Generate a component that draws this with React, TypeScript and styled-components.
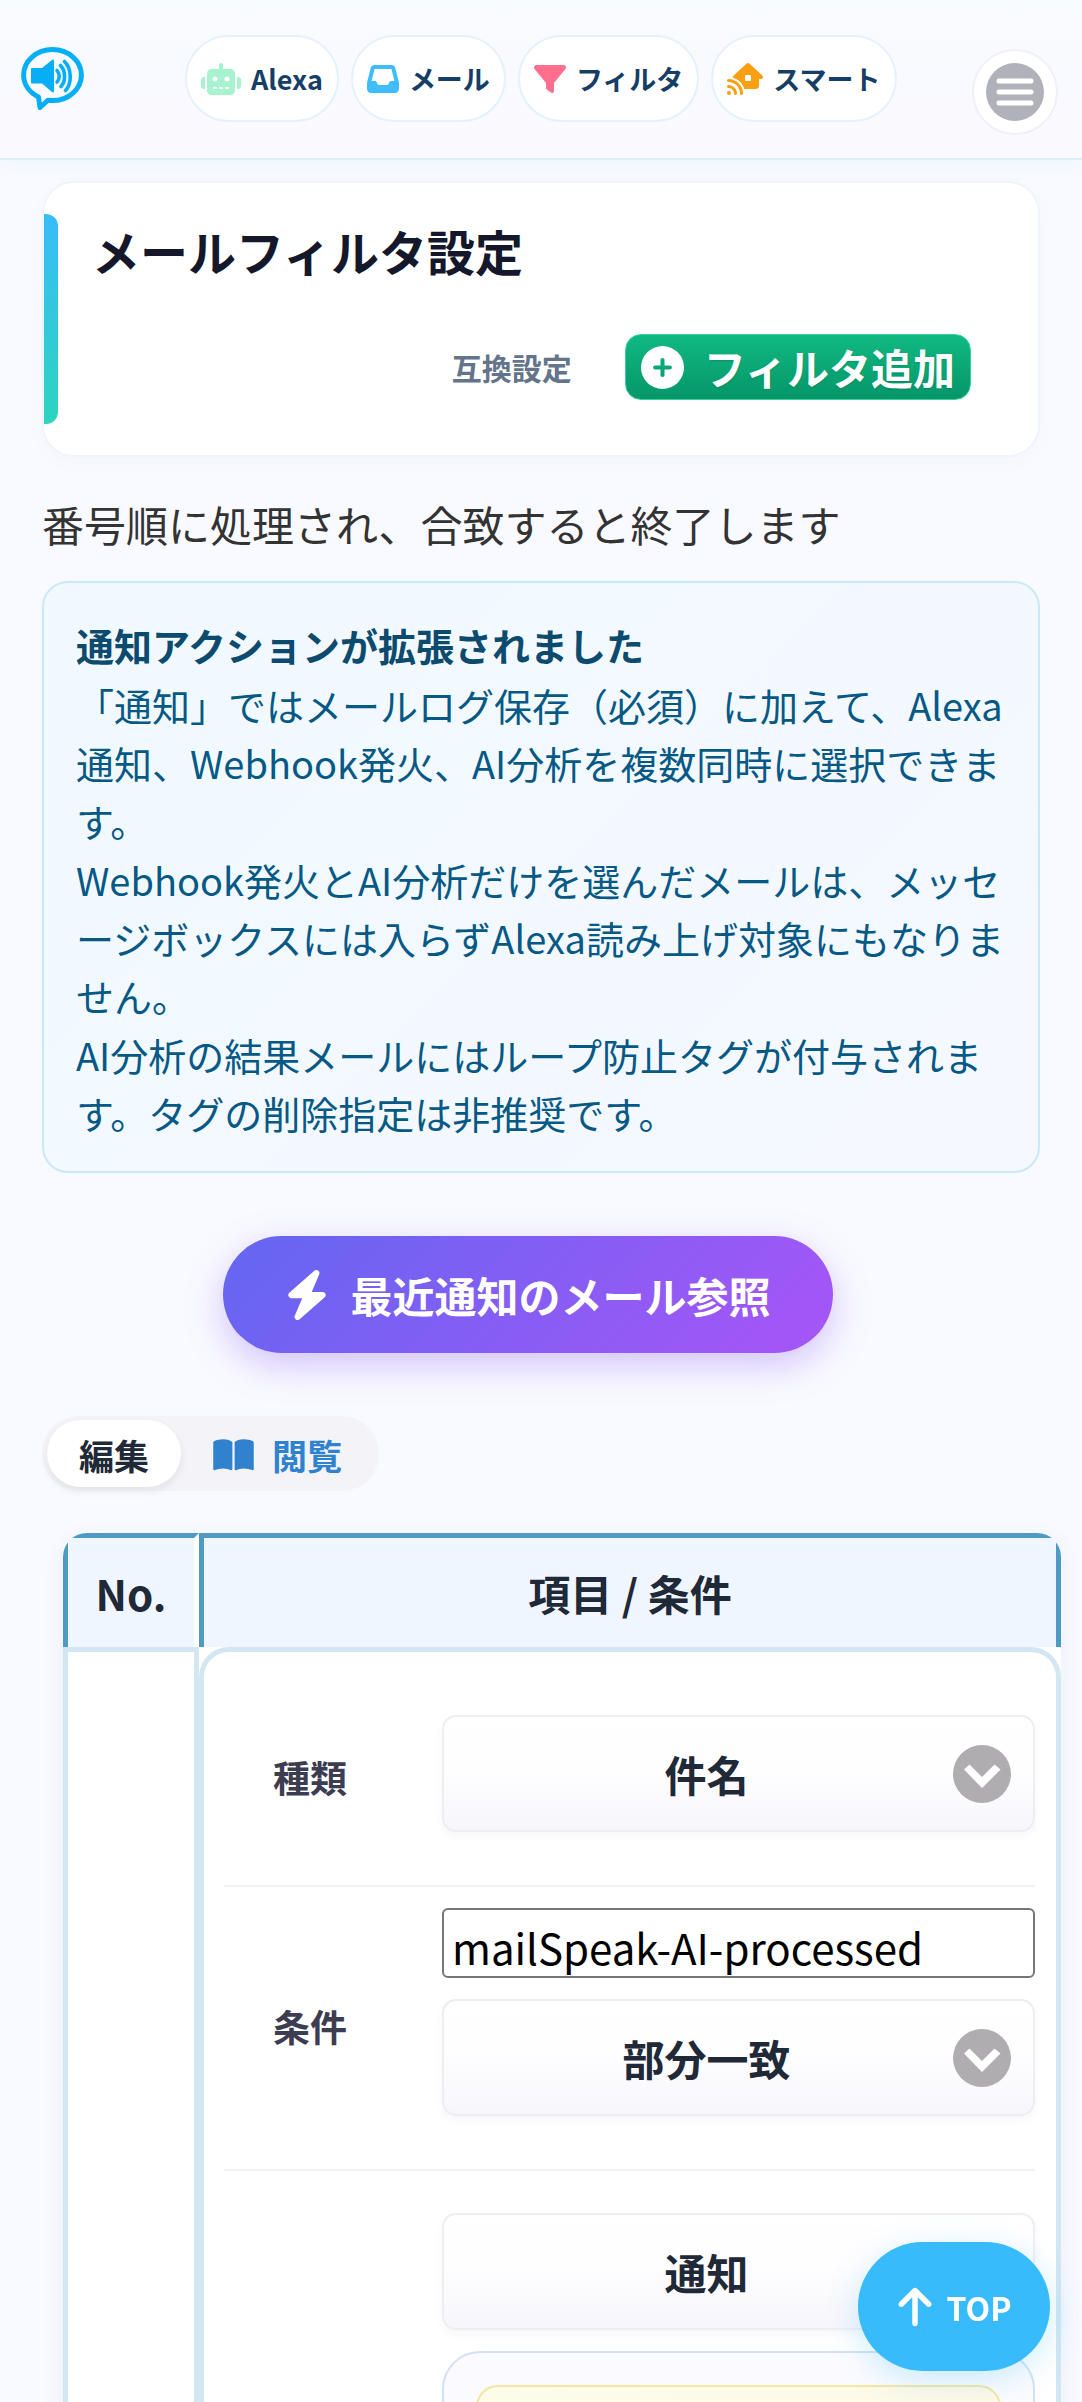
import React, { useState } from "react";
import styled, { createGlobalStyle } from "styled-components";
import {
  FaArrowUp,
  FaBolt,
  FaBookOpen,
  FaCirclePlus,
  FaFilter,
  FaHouseSignal,
  FaInbox,
  FaRobot,
} from "react-icons/fa6";

const GlobalStyle = createGlobalStyle`
  *, *::before, *::after { box-sizing: border-box; }
  html { scrollbar-width: none; }
  body {
    margin: 0;
    background: #f9faff;
    color: #333333;
    font-family: "Noto Sans CJK JP", "Noto Sans", sans-serif;
  }
  button, input, select { font-family: inherit; }
`;

const Screen = styled.div`
  height: 100vh;
  overflow-x: hidden;
  overflow-y: auto;
  scrollbar-width: none;
`;

const Header = styled.header`
  display: flex;
  align-items: flex-start;
  padding: 35px 24px 36px 21px;
  border-bottom: 2px solid #dcedf7;
  background: linear-gradient(180deg, #f8fbff, #faf9ff);
  box-shadow: 0 4px 20px rgba(56, 189, 248, 0.06);
`;

const LogoLink = styled.a`
  display: flex;
  width: 164px;
  padding-top: 12px;
`;

const Nav = styled.nav`
  display: flex;
  flex: 1;
  gap: 12px;
`;

const NavPill = styled.a<{ $tint: string; $iconWidth: number }>`
  display: flex;
  align-items: center;
  gap: 10px;
  height: 87px;
  padding: 0 14px;
  border: 2px solid #e6f1fb;
  border-radius: 44px;
  background: #ffffff;
  color: #153e66;
  font-size: 27px;
  font-weight: 700;
  line-height: 40px;
  text-decoration: none;
  white-space: nowrap;

  svg {
    flex: none;
    width: ${(p) => p.$iconWidth}px;
    height: 32px;
    color: ${(p) => p.$tint};
  }
`;

const MenuButton = styled.button`
  display: grid;
  place-items: center;
  width: 86px;
  height: 86px;
  margin: 14px 0 -14px;
  padding: 0;
  border: 2px solid #f0f0f8;
  border-radius: 50%;
  background: #ffffff;
`;

const Main = styled.main`
  padding: 21px 42px 0;
`;

const TitleCard = styled.section`
  position: relative;
  display: flex;
  flex-direction: column;
  gap: 46px;
  padding: 29px 67px 55px 48px;
  border: 2px solid #eef5fc;
  border-radius: 32px;
  background: #ffffff;
  box-shadow: 0 6px 24px rgba(15, 23, 42, 0.02);

  &::before {
    content: "";
    position: absolute;
    left: 0;
    top: 31px;
    bottom: 31px;
    width: 14px;
    border-radius: 0 12px 12px 0;
    background: linear-gradient(180deg, #38bdf8, #2dd4bf);
  }
`;

const PageTitle = styled.h1`
  margin: 0;
  color: #14182a;
  font-size: 48px;
  font-weight: 700;
  line-height: 76px;
`;

const CardActions = styled.div`
  display: flex;
  align-items: center;
  justify-content: flex-end;
  gap: 53px;
`;

const CompatLink = styled.a`
  color: #64748b;
  font-size: 30px;
  font-weight: 700;
  line-height: 44px;
  text-decoration: none;
`;

const AddButton = styled.button`
  display: flex;
  align-items: center;
  gap: 20px;
  height: 66px;
  padding: 0 15px;
  border: 1px solid #34d399;
  border-radius: 16px;
  background: linear-gradient(180deg, #10b981, #059669);
  color: #ffffff;
  font-size: 42px;
  font-weight: 700;
  line-height: 62px;
  text-shadow: 0 1px 2px rgba(0, 0, 0, 0.15);

  svg {
    width: 43px;
    height: 43px;
  }
`;

const Lead = styled.p`
  margin: 36px 0 26px;
  font-size: 42px;
  line-height: 62px;
`;

const Notice = styled.section`
  padding: 33px 24px 29px 32px;
  border: 2px solid #cbe8fb;
  border-radius: 26px;
  background: linear-gradient(135deg, #f0f9ff, #f5f8ff);
  color: #075985;
  font-size: 38px;
  line-height: 58px;
`;

const NoticeTitle = styled.h2`
  margin: 0 0 2px;
  color: #0c4a6e;
  font-size: 38px;
  font-weight: 700;
  line-height: 58px;
`;

const NoticeText = styled.p`
  margin: 0;

  & + & {
    margin-top: 1px;
  }
`;

const RecentRow = styled.div`
  display: flex;
  justify-content: center;
  padding: 63px 26px 63px 0;
`;

const RecentButton = styled.button`
  display: flex;
  align-items: center;
  gap: 21px;
  height: 117px;
  padding: 0 62px;
  border: 0;
  border-radius: 59px;
  background: linear-gradient(135deg, #6366f1, #a855f7);
  box-shadow: 0 12px 36px rgba(139, 92, 246, 0.35);
  color: #ffffff;
  font-size: 42px;
  font-weight: 700;
  line-height: 62px;
  white-space: nowrap;

  svg {
    width: 44px;
    height: 50px;
  }
`;

const Tabs = styled.div`
  display: flex;
  width: fit-content;
  padding: 4px 5px;
  border-radius: 37px;
  background: #f3f3f8;
`;

const Tab = styled.button<{ $active: boolean }>`
  display: flex;
  align-items: center;
  gap: 18px;
  height: 67px;
  padding: 2px 32px 0;
  border: 0;
  border-radius: 34px;
  background: ${(p) => (p.$active ? "#ffffff" : "transparent")};
  box-shadow: ${(p) => (p.$active ? "0 4px 8px rgba(30, 30, 60, 0.08)" : "none")};
  color: ${(p) => (p.$active ? "#1f2937" : "#3182ce")};
  font-size: 35px;
  font-weight: 700;
  line-height: 52px;

  svg {
    width: 41px;
    height: 36px;
  }
`;

const TableFrame = styled.div`
  margin: 42px -21px 60px 21px;
  border-radius: 24px;
  overflow: hidden;
  background: #ffffff;
  box-shadow: 0 6px 24px rgba(30, 64, 175, 0.06);
`;

const FilterTable = styled.table`
  width: 100%;
  table-layout: fixed;
  border-collapse: separate;
  border-spacing: 0;
`;

const HeadCell = styled.th<{ $narrow?: boolean }>`
  width: ${(p) => (p.$narrow ? "136px" : "auto")};
  height: 114px;
  padding: 0;
  border: 5px solid #4e9ac5;
  border-right-color: ${(p) => (p.$narrow ? "#ffffff" : "#4e9ac5")};
  border-bottom-width: 0;
  background: #f0f6ff;
  background-clip: padding-box;
  color: #1f2937;
  font-size: 42px;
  font-weight: 700;
  line-height: 62px;
`;

const BodyCell = styled.td<{ $rounded?: boolean }>`
  padding: ${(p) => (p.$rounded ? "21px 21px 21px 20px" : "0")};
  border: 5px solid #d2e7f2;
  border-radius: ${(p) => (p.$rounded ? "30px" : "0")};
  background: #ffffff;
  vertical-align: top;
`;

const Field = styled.div`
  display: grid;
  grid-template-columns: 172px 1fr;
  column-gap: 46px;
  align-items: center;
  padding: 21px 0 53px;
  border-bottom: 2px solid #f5f2f8;
`;

const FieldLabel = styled.label`
  padding-top: 28px;
  color: #3d3d52;
  font-size: 37px;
  font-weight: 700;
  line-height: 54px;
  text-align: center;
`;

const Controls = styled.div`
  display: flex;
  flex-direction: column;
  gap: 21px;
  grid-column: 2;
`;

const SelectWrap = styled.div<{ $spaced?: boolean }>`
  position: relative;
  margin-top: ${(p) => (p.$spaced ? "21px" : "0")};

  svg {
    position: absolute;
    right: 24px;
    top: 30px;
    pointer-events: none;
  }
`;

const Select = styled.select`
  appearance: none;
  display: block;
  width: 100%;
  height: 117px;
  padding: 0 92px 0 28px;
  border: 2px solid #efedf4;
  border-radius: 14px;
  background: linear-gradient(180deg, #ffffff 0%, #fefdff 45%, #f7f6fb 100%);
  box-shadow: 0 4px 8px rgba(60, 40, 100, 0.04);
  color: #1f2937;
  font-size: 42px;
  font-weight: 700;
  text-align: center;
  text-align-last: center;
`;

const TextInput = styled.input`
  width: 100%;
  height: 70px;
  padding: 6px 8px 0;
  border: 2px solid #76767a;
  border-radius: 6px;
  background: #ffffff;
  color: #000000;
  font-size: 42px;
  line-height: 60px;
`;

const ActionPanel = styled.div`
  padding: 32px;
  border: 2px solid #d3e0f8;
  border-radius: 38px;
  background: #fbfbff;
`;

const ActionNote = styled.div`
  min-height: 360px;
  border: 2px solid #f3e6a2;
  border-radius: 22px;
  background: linear-gradient(90deg, #fcfde8, #fef9e8);
`;

const TopButton = styled.button`
  position: fixed;
  right: 32px;
  bottom: 31px;
  display: flex;
  align-items: center;
  justify-content: center;
  gap: 14px;
  width: 192px;
  height: 129px;
  padding: 0;
  border: 0;
  border-radius: 65px;
  background: #38bbfb;
  box-shadow: 0 8px 32px rgba(56, 189, 248, 0.25);
  color: #ffffff;
  font-size: 32px;
  font-weight: 700;
  line-height: 48px;

  svg {
    width: 36px;
    height: 44px;
  }
`;

function LogoMark() {
  return (
    <svg width="63" height="63" viewBox="0 0 63 63" fill="none" aria-hidden="true">
      <path
        d="M31.5 2.6C47.500 2.600 60.400 14 60.400 28C60.400 42 47.500 53.600 31.500 53.600L27 53.200L19 60.500L17.500 50C8.500 45.500 2.600 37.500 2.600 28C2.600 14 15.500 2.600 31.500 2.600Z"
        stroke="#06aff5"
        strokeWidth="5"
        strokeLinejoin="round"
      />
      <path
        d="M11 21H21L31 12.900C32 12.200 33 12.500 33 14V44C33 45.500 32 45.800 31 45L21 36.500H11C10.300 36.500 10 36 10 35.500V22C10 21.400 10.300 21 11 21Z"
        fill="#06aff5"
      />
      <path
        d="M36 23.500C39 26.500 39 32 36 35M39.500 18.500C44.800 24 44.800 34.500 40 39.500M43.500 14.500C51 22 51 36.500 44.500 43.500"
        stroke="#06aff5"
        strokeWidth="3.600"
        strokeLinecap="round"
      />
    </svg>
  );
}

function MenuGlyph() {
  return (
    <svg width="58" height="58" viewBox="0 0 58 58" aria-hidden="true">
      <circle cx="29" cy="29" r="29" fill="#b1b2b9" />
      <path d="M13 18H45M13 29H45M13 40H45" stroke="#ffffff" strokeWidth="5" strokeLinecap="round" />
    </svg>
  );
}

function ChevronBadge() {
  return (
    <svg width="58" height="58" viewBox="0 0 58 58" aria-hidden="true">
      <circle cx="29" cy="29" r="29" fill="#b0adb1" />
      <path d="M11 24.500L16.500 19.500L29 32L41.500 19.500L47.500 24.500L29 43Z" fill="#ffffff" />
    </svg>
  );
}

interface DropdownProps {
  id: string;
  options: string[];
  label?: string;
  spaced?: boolean;
}

function Dropdown({ id, options, label, spaced }: DropdownProps) {
  return (
    <SelectWrap $spaced={spaced}>
      <Select id={id} aria-label={label}>
        {options.map((o) => (
          <option key={o}>{o}</option>
        ))}
      </Select>
      <ChevronBadge />
    </SelectWrap>
  );
}

const navItems = [
  { text: "Alexa", tint: "#a7f3d0", width: 40, Icon: FaRobot },
  { text: "メール", tint: "#3fbdfb", width: 32, Icon: FaInbox },
  { text: "フィルタ", tint: "#fd6f8c", width: 32, Icon: FaFilter },
  { text: "スマート", tint: "#f8a012", width: 36, Icon: FaHouseSignal },
];

export default function App() {
  const [mode, setMode] = useState<"edit" | "view">("edit");
  const [condition, setCondition] = useState("mailSpeak-AI-processed");

  return (
    <Screen>
      <GlobalStyle />
      <Header>
        <LogoLink href="#" aria-label="mailSpeak">
          <LogoMark />
        </LogoLink>
        <Nav>
          {navItems.map(({ text, tint, width, Icon }) => (
            <NavPill key={text} href="#" $tint={tint} $iconWidth={width}>
              <Icon aria-hidden="true" />
              {text}
            </NavPill>
          ))}
        </Nav>
        <MenuButton type="button" aria-label="メニュー">
          <MenuGlyph />
        </MenuButton>
      </Header>

      <Main>
        <TitleCard>
          <PageTitle>メールフィルタ設定</PageTitle>
          <CardActions>
            <CompatLink href="#">互換設定</CompatLink>
            <AddButton type="button">
              <FaCirclePlus aria-hidden="true" />
              フィルタ追加
            </AddButton>
          </CardActions>
        </TitleCard>

        <Lead>番号順に処理され、合致すると終了します</Lead>

        <Notice>
          <NoticeTitle>通知アクションが拡張されました</NoticeTitle>
          <NoticeText>
            「通知」ではメールログ保存（必須）に加えて、Alexa通知、Webhook発火、AI分析を複数同時に選択できます。
          </NoticeText>
          <NoticeText>
            Webhook発火とAI分析だけを選んだメールは、メッセージボックスには入らずAlexa読み上げ対象にもなりません。
          </NoticeText>
          <NoticeText>
            AI分析の結果メールにはループ防止タグが付与されます。タグの削除指定は非推奨です。
          </NoticeText>
        </Notice>

        <RecentRow>
          <RecentButton type="button">
            <FaBolt aria-hidden="true" />
            最近通知のメール参照
          </RecentButton>
        </RecentRow>

        <Tabs>
          <Tab type="button" $active={mode === "edit"} onClick={() => setMode("edit")}>
            編集
          </Tab>
          <Tab type="button" $active={mode === "view"} onClick={() => setMode("view")}>
            <FaBookOpen aria-hidden="true" />
            閲覧
          </Tab>
        </Tabs>

        <TableFrame>
          <FilterTable>
            <thead>
              <tr>
                <HeadCell $narrow scope="col">
                  No.
                </HeadCell>
                <HeadCell scope="col">項目 / 条件</HeadCell>
              </tr>
            </thead>
            <tbody>
              <tr>
                <BodyCell />
                <BodyCell $rounded>
                  <Field>
                    <FieldLabel htmlFor="kind">種類</FieldLabel>
                    <Controls>
                      <Dropdown id="kind" options={["件名", "本文"]} spaced />
                    </Controls>
                  </Field>
                  <Field>
                    <FieldLabel htmlFor="condition">条件</FieldLabel>
                    <Controls>
                      <TextInput
                        id="condition"
                        type="text"
                        value={condition}
                        onChange={(e) => setCondition(e.target.value)}
                      />
                      <Dropdown id="match" label="一致方法" options={["部分一致", "完全一致"]} />
                    </Controls>
                  </Field>
                  <Field>
                    <Controls>
                      <Dropdown id="action" label="動作" options={["通知", "無視"]} spaced />
                      <ActionPanel>
                        <ActionNote />
                      </ActionPanel>
                    </Controls>
                  </Field>
                </BodyCell>
              </tr>
            </tbody>
          </FilterTable>
        </TableFrame>
      </Main>

      <TopButton type="button">
        <FaArrowUp aria-hidden="true" />
        TOP
      </TopButton>
    </Screen>
  );
}
